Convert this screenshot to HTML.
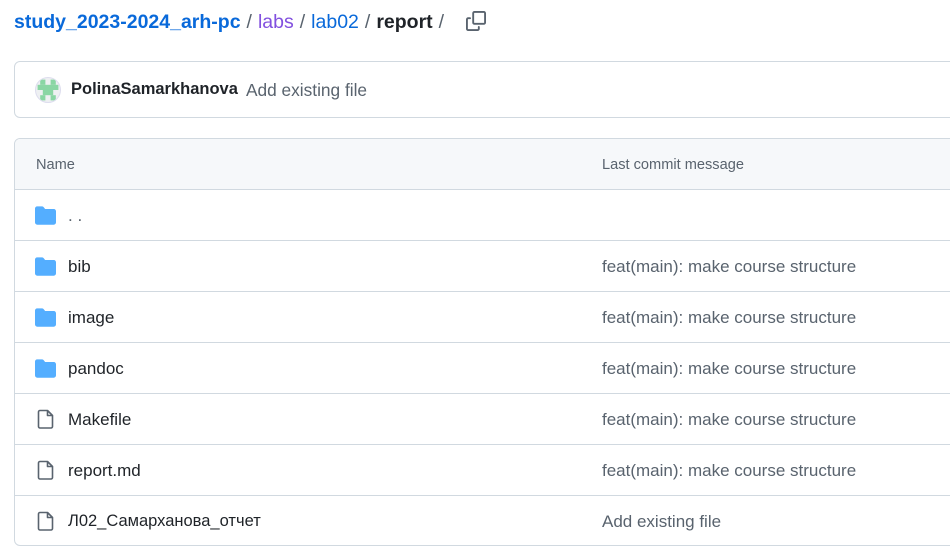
<!DOCTYPE html>
<html><head><meta charset="utf-8"><style>
*{box-sizing:border-box;margin:0;padding:0}
body{width:950px;height:552px;overflow:hidden;background:#fff;font-family:"Liberation Sans",sans-serif;color:#1f2328;position:relative}
.bc{position:absolute;left:14px;top:10px;font-size:19.5px;line-height:24px;white-space:nowrap}
.bc a{color:#0969da;text-decoration:none}
.bc .b{font-weight:bold}
.bc .s{color:#59636e;margin:0 6px}
.bc .v{color:#8250df;font-weight:normal}
.copy{position:absolute;left:466px;top:11px}
.commit{position:absolute;left:14px;top:61px;width:960px;height:57px;border:1px solid #d1d9e0;border-radius:6px}
.av{position:absolute;left:20px;top:15px;width:26px;height:26px;border-radius:50%;background:#eef0f2;border:1px solid #dde;overflow:hidden}
.commit .u{position:absolute;left:56px;top:18px;font-size:16.5px;font-weight:bold;color:#1f2328}
.commit .m{position:absolute;left:231px;top:18px;font-size:17.3px;color:#59636e}
.tbl{position:absolute;left:14px;top:138px;width:960px;height:408px;border:1px solid #d1d9e0;border-radius:6px;overflow:hidden}
.hd{height:51px;background:#f6f8fa;border-bottom:1px solid #d1d9e0;position:relative;font-size:14.6px;color:#59636e}
.hd span{position:absolute;top:18px}
.row{height:51px;border-bottom:1px solid #d1d9e0;position:relative;font-size:17px}
.row:last-child{border-bottom:none}
.row .ic{position:absolute;left:20px;top:16px}
.row .fi{position:absolute;left:22px;top:15px}
.row .n{position:absolute;left:53px;top:16px;color:#1f2328}
.row .c{position:absolute;left:587px;top:16px;color:#59636e}
</style></head><body>
<div class="bc"><a class="b" href="#">study_2023-2024_arh-pc</a><span class="s">/</span><a class="v" href="#">labs</a><span class="s">/</span><a href="#">lab02</a><span class="s">/</span><span class="b">report</span><span class="s">/</span></div>
<svg class="copy" width="20" height="20" viewBox="0 0 16 16" fill="#59636e"><path d="M0 6.75C0 5.784.784 5 1.750 5h1.5a.75.75 0 0 1 0 1.5h-1.5a.25.25 0 0 0-.25.25v7.5c0 .138.112.25.25.25h7.5a.25.25 0 0 0 .25-.25v-1.5a.75.75 0 0 1 1.5 0v1.5A1.75 1.75 0 0 1 9.25 16h-7.5A1.75 1.75 0 0 1 0 14.25Z"/><path d="M5 1.75C5 .784 5.784 0 6.75 0h7.5C15.216 0 16 .784 16 1.75v7.5A1.75 1.75 0 0 1 14.25 11h-7.5A1.75 1.75 0 0 1 5 9.25Zm1.75-.25a.25.25 0 0 0-.25.25v7.5c0 .138.112.25.25.25h7.5a.25.25 0 0 0 .25-.25v-7.5a.25.25 0 0 0-.25-.25Z"/></svg>
<div class="commit">
<div class="av"><svg width="26" height="26" viewBox="0 0 5 5" style="margin:-1px"><g fill="#8ad6a4"><rect x="1" y="0.5" width="1" height="1"/><rect x="3" y="0.5" width="1" height="1"/><rect x="0.5" y="1.5" width="4" height="1"/><rect x="1.5" y="2.5" width="2" height="1"/><rect x="1" y="3.5" width="1" height="1"/><rect x="3" y="3.5" width="1" height="1"/></g></svg></div>
<span class="u">PolinaSamarkhanova</span><span class="m">Add existing file</span></div>
<div class="tbl">
<div class="hd"><span style="left:21px">Name</span><span style="left:587px">Last commit message</span></div>
<div class="row"><svg class="ic" width="21" height="19" viewBox="0 0 16 14"><path fill="#54aeff" d="M0 1.75C0 .784.784 0 1.75 0h3.5c.55 0 1.07.26 1.4.7l.9 1.2a.25.25 0 0 0 .2.1h6.5c.966 0 1.75.784 1.75 1.75v8.5A1.75 1.75 0 0 1 14.25 14H1.75A1.75 1.75 0 0 1 0 12.25Z"/></svg><span class="n" style="color:#59636e">. .</span></div>
<div class="row"><svg class="ic" width="21" height="19" viewBox="0 0 16 14"><path fill="#54aeff" d="M0 1.75C0 .784.784 0 1.75 0h3.5c.55 0 1.07.26 1.4.7l.9 1.2a.25.25 0 0 0 .2.1h6.5c.966 0 1.75.784 1.75 1.75v8.5A1.75 1.75 0 0 1 14.25 14H1.75A1.75 1.75 0 0 1 0 12.25Z"/></svg><span class="n">bib</span><span class="c">feat(main): make course structure</span></div>
<div class="row"><svg class="ic" width="21" height="19" viewBox="0 0 16 14"><path fill="#54aeff" d="M0 1.75C0 .784.784 0 1.75 0h3.5c.55 0 1.07.26 1.4.7l.9 1.2a.25.25 0 0 0 .2.1h6.5c.966 0 1.75.784 1.75 1.75v8.5A1.75 1.75 0 0 1 14.25 14H1.75A1.75 1.75 0 0 1 0 12.25Z"/></svg><span class="n">image</span><span class="c">feat(main): make course structure</span></div>
<div class="row"><svg class="ic" width="21" height="19" viewBox="0 0 16 14"><path fill="#54aeff" d="M0 1.75C0 .784.784 0 1.75 0h3.5c.55 0 1.07.26 1.4.7l.9 1.2a.25.25 0 0 0 .2.1h6.5c.966 0 1.75.784 1.75 1.75v8.5A1.75 1.75 0 0 1 14.25 14H1.75A1.75 1.75 0 0 1 0 12.25Z"/></svg><span class="n">pandoc</span><span class="c">feat(main): make course structure</span></div>
<div class="row"><svg class="fi" width="18" height="20" viewBox="0 0 18 20"><path fill="none" stroke="#59636e" stroke-width="1.6" stroke-linejoin="round" d="M3 1.5h7.5l5 5v11a1.5 1.5 0 0 1-1.5 1.5H3a1.5 1.5 0 0 1-1.5-1.5V3A1.5 1.5 0 0 1 3 1.5Z M10.5 1.5v5h5"/></svg><span class="n">Makefile</span><span class="c">feat(main): make course structure</span></div>
<div class="row"><svg class="fi" width="18" height="20" viewBox="0 0 18 20"><path fill="none" stroke="#59636e" stroke-width="1.6" stroke-linejoin="round" d="M3 1.5h7.5l5 5v11a1.5 1.5 0 0 1-1.5 1.5H3a1.5 1.5 0 0 1-1.5-1.5V3A1.5 1.5 0 0 1 3 1.5Z M10.5 1.5v5h5"/></svg><span class="n">report.md</span><span class="c">feat(main): make course structure</span></div>
<div class="row"><svg class="fi" width="18" height="20" viewBox="0 0 18 20"><path fill="none" stroke="#59636e" stroke-width="1.6" stroke-linejoin="round" d="M3 1.5h7.5l5 5v11a1.5 1.5 0 0 1-1.5 1.5H3a1.5 1.5 0 0 1-1.5-1.5V3A1.5 1.5 0 0 1 3 1.5Z M10.5 1.5v5h5"/></svg><span class="n" style="font-size:16.5px">Л02_Самарханова_отчет</span><span class="c">Add existing file</span></div>
</div>
</body></html>
